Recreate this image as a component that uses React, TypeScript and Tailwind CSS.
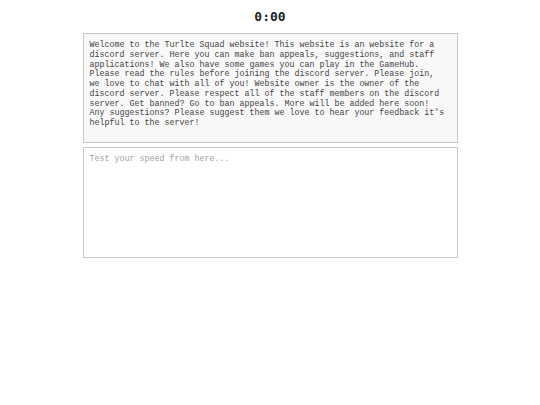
const info = `Welcome to the Turlte Squad website! This website is an website for a
discord server. Here you can make ban appeals, suggestions, and staff
applications! We also have some games you can play in the GameHub.
Please read the rules before joining the discord server. Please join,
we love to chat with all of you! Website owner is the owner of the
discord server. Please respect all of the staff members on the discord
server. Get banned? Go to ban appeals. More will be added here soon!
Any suggestions? Please suggest them we love to hear your feedback it's
helpful to the server!`;

export default function App() {
  return (
    <div className="min-h-screen bg-white flex flex-col items-center font-['Liberation_Mono',monospace]">
      {/* Timer */}
      <div className="mt-[9px] h-[16px] text-[13px] leading-[16px] font-bold text-[#222] font-['DejaVu_Sans_Mono',monospace]">
        0:00
      </div>

      {/* Info */}
      <div className="mt-[8px] w-[375px] h-[110px] border border-[#c8c8c8] bg-[#f8f8f8] px-[6px] pt-[7px] text-[8.33px] leading-[9.75px] text-[#444] whitespace-pre">
        {info}
      </div>

      {/* Typing area */}
      <textarea
        placeholder="Test your speed from here..."
        className="mt-[4px] w-[375px] h-[111px] border border-[#c8c8c8] bg-white px-[6px] pt-[7px] font-['Liberation_Mono',monospace] text-[8.33px] leading-[9.75px] text-[#444] placeholder:text-[#a0a0a0] resize-none outline-none"
      />
    </div>
  );
}
